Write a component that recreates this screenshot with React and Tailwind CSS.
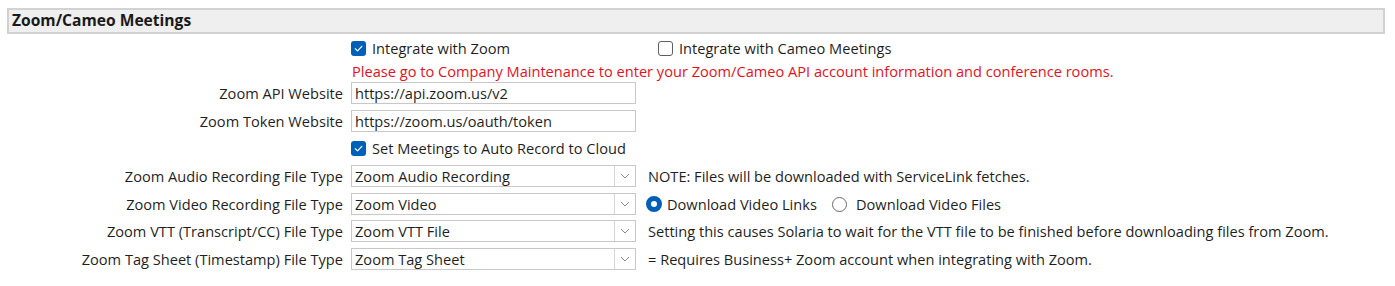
import React from "react";

const font = { fontFamily: '"Open Sans", "Noto Sans", sans-serif' };

function Check({ checked }) {
  return checked ? (
    <span className="inline-flex w-[15px] h-[15px] rounded-[3px] bg-[#005fb8] items-center justify-center shrink-0">
      <svg width="11" height="11" viewBox="0 0 12 12" fill="none">
        <path d="M2.5 6.3 L5 8.6 L9.6 3.6" stroke="white" strokeWidth="1.3" strokeLinecap="round" strokeLinejoin="round" />
      </svg>
    </span>
  ) : (
    <span className="inline-block w-[15px] h-[15px] rounded-[3px] border border-[#5f5f5f] bg-white shrink-0" />
  );
}

function Radio({ checked }) {
  return checked ? (
    <span className="inline-block w-[16px] h-[16px] rounded-full border-[5px] border-[#005fb8] bg-white shrink-0" />
  ) : (
    <span className="inline-block w-[15px] h-[15px] rounded-full border border-[#6b6b6b] bg-white shrink-0" />
  );
}

function Label({ children }) {
  return <div className="w-[343px] shrink-0 text-right whitespace-nowrap text-[#1f1f1f]">{children}</div>;
}

function Input({ value }) {
  return (
    <div className="ml-[8px] w-[285px] h-[22px] border border-[#c8c8c8] bg-white flex items-center px-[3px] text-[#1f1f1f] shrink-0">
      {value}
    </div>
  );
}

function Select({ value }) {
  return (
    <div className="ml-[8px] w-[285px] h-[22px] border border-[#c8c8c8] bg-white flex items-stretch text-[#1f1f1f] shrink-0">
      <div className="flex-1 flex items-center px-[3px]">{value}</div>
      <div className="w-[21px] border-l border-[#d6d6d6] flex items-center justify-center">
        <svg width="10" height="6" viewBox="0 0 10 6" fill="none">
          <path d="M1 1 L5 5 L9 1" stroke="#8a8a8a" strokeWidth="1" />
        </svg>
      </div>
    </div>
  );
}

export default function App() {
  return (
    <div className="w-[1395px] h-[286px] bg-white text-[14.6px] leading-none whitespace-nowrap" style={font}>
      <div className="pt-[8px] pl-[7px] pr-[10px]">
        <div className="h-[26px] border-2 border-[#d2d2d2] bg-[#efefef] flex items-center pl-[3px]">
          <span className="font-bold text-[15.6px] text-[#1a1a1a]">Zoom/Cameo Meetings</span>
        </div>
      </div>

      <div className="flex items-center h-[22px] mt-[3px] pl-[351px]">
        <span className="w-[307px] flex items-center">
          <Check checked />
          <span className="ml-[6px] text-[#1f1f1f]">Integrate with Zoom</span>
        </span>
        <span className="flex items-center">
          <Check />
          <span className="ml-[6px] text-[#1f1f1f]">Integrate with Cameo Meetings</span>
        </span>
      </div>

      <div className="flex items-center h-[20px] mt-[2px] pl-[352px] text-[#e81123]">
        Please go to Company Maintenance to enter your Zoom/Cameo API account information and conference rooms.
      </div>

      <div className="flex items-center mt-[1px]">
        <Label>Zoom API Website</Label>
        <Input value="https://api.zoom.us/v2" />
      </div>
      <div className="flex items-center mt-[6px]">
        <Label>Zoom Token Website</Label>
        <Input value="https://zoom.us/oauth/token" />
      </div>

      <div className="flex items-center h-[22px] mt-[5px] pl-[351px]">
        <Check checked />
        <span className="ml-[6px] text-[#1f1f1f]">Set Meetings to Auto Record to Cloud</span>
      </div>

      <div className="flex items-center mt-[6px]">
        <Label>Zoom Audio Recording File Type</Label>
        <Select value="Zoom Audio Recording" />
        <span className="ml-[12px] text-[#1f1f1f]">NOTE: Files will be downloaded with ServiceLink fetches.</span>
      </div>
      <div className="flex items-center mt-[6px]">
        <Label>Zoom Video Recording File Type</Label>
        <Select value="Zoom Video" />
        <span className="ml-[10px] flex items-center text-[#1f1f1f]">
          <span className="w-[186px] flex items-center">
            <Radio checked />
            <span className="ml-[5px]">Download Video Links</span>
          </span>
          <Radio />
          <span className="ml-[9px]">Download Video Files</span>
        </span>
      </div>
      <div className="flex items-center mt-[5px]">
        <Label>Zoom VTT (Transcript/CC) File Type</Label>
        <Select value="Zoom VTT File" />
        <span className="ml-[12px] text-[#1f1f1f]">
          Setting this causes Solaria to wait for the VTT file to be finished before downloading files from Zoom.
        </span>
      </div>
      <div className="flex items-center mt-[6px]">
        <Label>Zoom Tag Sheet (Timestamp) File Type</Label>
        <Select value="Zoom Tag Sheet" />
        <span className="ml-[12px] text-[#1f1f1f]">= Requires Business+ Zoom account when integrating with Zoom.</span>
      </div>
    </div>
  );
}
